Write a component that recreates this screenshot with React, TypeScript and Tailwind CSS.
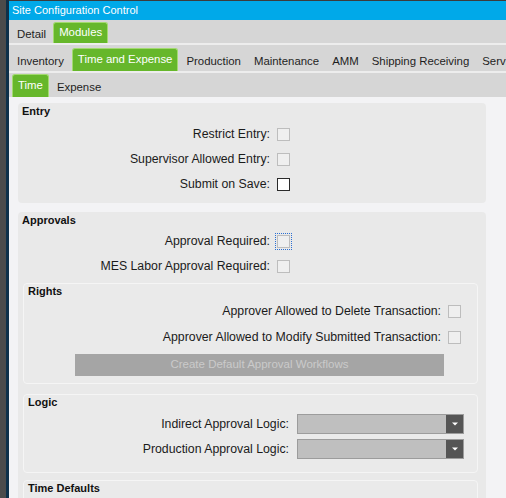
import React from "react";

type TabProps = { label: string; active?: boolean };

function Tab({ label, active }: TabProps) {
  if (active) {
    return (
      <div className="h-full px-[5px] flex items-center bg-[#66b72b] border border-b-0 border-[#a3da70] rounded-t-[3px] text-white whitespace-nowrap">
        {label}
      </div>
    );
  }
  return (
    <div className="h-full px-[5px] pt-[4px] flex items-center text-[#1e1e1e] whitespace-nowrap">
      {label}
    </div>
  );
}

function Check({ enabled, focus }: { enabled?: boolean; focus?: boolean }) {
  const base = enabled
    ? "border-[#2a2a2a] bg-white"
    : "border-[#bdbdbd] bg-[#efefef]";
  const f = focus ? " outline-1 outline-dotted outline-[#2b6fd3] outline-offset-[1px]" : "";
  return <div className={"w-[13px] h-[13px] border shrink-0 " + base + f} />;
}

function CheckRow({
  label,
  enabled,
  focus,
  pr,
  h,
}: {
  label: string;
  enabled?: boolean;
  focus?: boolean;
  pr: string;
  h: string;
}) {
  return (
    <div className={"flex items-center justify-end gap-[7px] " + pr + " " + h}>
      <span className="whitespace-nowrap">{label}</span>
      <Check enabled={enabled} focus={focus} />
    </div>
  );
}

function Title({ children }: { children: React.ReactNode }) {
  return (
    <div className="pl-[4px] text-[11px] font-bold leading-[14px] text-[#111]">
      {children}
    </div>
  );
}

function Dropdown() {
  return (
    <div className="w-[167px] h-[20px] border border-[#9c9c9c] bg-[#bfbfbf] flex justify-end shrink-0">
      <div className="w-[17px] h-full bg-[#555555] flex items-center justify-center">
        <svg width="6" height="4" viewBox="0 0 6 4">
          <path d="M0 0.5 L6 0.5 L3 3.5 Z" fill="#ffffff" />
        </svg>
      </div>
    </div>
  );
}

function DropRow({ label }: { label: string }) {
  return (
    <div className="flex items-center justify-end gap-[8px] pr-[13px] h-[20px]">
      <span className="whitespace-nowrap">{label}</span>
      <Dropdown />
    </div>
  );
}

export default function App() {
  return (
    <div className="w-[506px] h-[498px] flex overflow-hidden font-['Liberation_Sans',Arial,sans-serif] text-[12.3px] text-[#1b1b1b]">
      <div className="w-[6px] bg-[#4b4b4b] shrink-0" />
      <div className="w-[3px] bg-[#0e3049] shrink-0" />
      <div className="flex-1 min-w-0 flex flex-col">
        <div className="h-[1px] bg-[#3c3c3c]" />
        <div className="h-[19px] bg-[#00a9e9] flex items-center pl-[3px] text-[11px] text-white whitespace-nowrap">
          Site Configuration Control
        </div>
        <div className="h-[23px] bg-[#d6d6d6] flex items-end pl-[3px] pt-[2px] gap-[2px] text-[11.4px]">
          <Tab label="Detail" />
          <Tab label="Modules" active />
        </div>
        <div className="h-[2px] bg-[#ededed]" />
        <div className="h-[26px] bg-[#d6d6d6] flex items-end pl-[3px] pt-[3px] gap-[3px] text-[11.4px] overflow-hidden">
          <Tab label="Inventory" />
          <Tab label="Time and Expense" active />
          <Tab label="Production" />
          <Tab label="Maintenance" />
          <Tab label="AMM" />
          <Tab label="Shipping Receiving" />
          <Tab label="Service" />
        </div>
        <div className="h-[2px] bg-[#ededed]" />
        <div className="h-[24px] bg-[#d6d6d6] flex items-end pl-[3px] pt-[1px] gap-[3px] text-[11.4px]">
          <Tab label="Time" active />
          <Tab label="Expense" />
        </div>
        <div className="flex-1 bg-[#f3f3f5] pl-[9px] pr-[20px] pt-[6px] overflow-hidden">
          <div className="rounded-[4px] bg-[#e9e9e9] pt-[1px] pb-[6px]">
            <Title>Entry</Title>
            <div className="mt-[4px]">
              <CheckRow label="Restrict Entry:" pr="pr-[196px]" h="h-[25px]" />
              <CheckRow label="Supervisor Allowed Entry:" pr="pr-[196px]" h="h-[25px]" />
              <CheckRow label="Submit on Save:" enabled pr="pr-[196px]" h="h-[25px]" />
            </div>
          </div>
          <div className="mt-[9px] rounded-[4px] bg-[#e9e9e9] pt-[1px] pb-[10px]">
            <Title>Approvals</Title>
            <div className="mt-[2px]">
              <CheckRow label="Approval Required:" focus pr="pr-[196px]" h="h-[25px]" />
              <CheckRow label="MES Labor Approval Required:" pr="pr-[196px]" h="h-[25px]" />
            </div>
            <div className="mt-[4px] ml-[5px] mr-[8px] border border-[#f5f5f5] rounded-[4px] bg-[#eaeaea] pb-[7px]">
              <Title>Rights</Title>
              <CheckRow label="Approver Allowed to Delete Transaction:" pr="pr-[16px]" h="h-[26px]" />
              <CheckRow label="Approver Allowed to Modify Submitted Transaction:" pr="pr-[16px]" h="h-[26px]" />
              <div className="mt-[4px] ml-[51px] mr-[33px] h-[22px] bg-[#a5a5a5] flex items-center justify-center text-[11.5px] text-[#cacaca] whitespace-nowrap">
                Create Default Approval Workflows
              </div>
            </div>
            <div className="mt-[10px] ml-[5px] mr-[8px] border border-[#f5f5f5] rounded-[4px] bg-[#eaeaea] pb-[13px]">
              <Title>Logic</Title>
              <div className="mt-[5px] flex flex-col gap-[5px]">
                <DropRow label="Indirect Approval Logic:" />
                <DropRow label="Production Approval Logic:" />
              </div>
            </div>
            <div className="mt-[7px] ml-[5px] mr-[8px] border border-[#f5f5f5] rounded-[4px] bg-[#eaeaea] h-[60px]">
              <Title>Time Defaults</Title>
            </div>
          </div>
        </div>
      </div>
    </div>
  );
}
